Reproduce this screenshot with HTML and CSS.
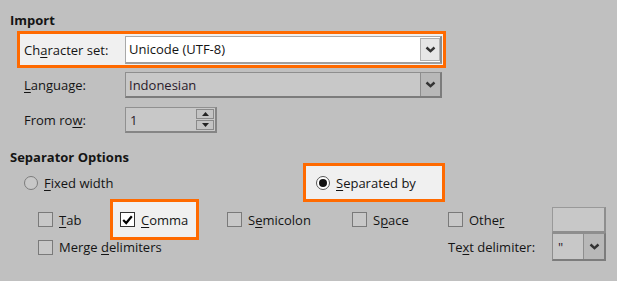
FILE: index.html
```html
<!DOCTYPE html>
<html>
<head>
<meta charset="utf-8">
<link rel="stylesheet" href="styles.css">
</head>
<body>
<div class="dlg">
  <div class="hd">Import</div>
  <div class="frow hl">
    <span class="lbl">Ch<u>a</u>racter set:</span>
    <div class="combo white">
      <span class="val">Unicode (UTF-8)</span>
      <span class="btn"><svg width="11" height="7" viewBox="0 0 11 7"><polyline points="1.5,1.5 5.5,5.2 9.5,1.5" fill="none" stroke="#333" stroke-width="2.4"/></svg></span>
    </div>
  </div>
  <div class="frow lang">
    <span class="lbl"><u>L</u>anguage:</span>
    <div class="combo gray">
      <span class="val">Indonesian</span>
      <span class="btn"><svg width="11" height="7" viewBox="0 0 11 7"><polyline points="1.5,1.5 5.5,5.2 9.5,1.5" fill="none" stroke="#333" stroke-width="2.4"/></svg></span>
    </div>
  </div>
  <div class="frow from">
    <span class="lbl">From ro<u>w</u>:</span>
    <div class="spin">
      <span class="val">1</span>
      <span class="spbtns">
        <span class="sb"><svg width="7" height="4" viewBox="0 0 7 4"><polygon points="0,4 3.5,0 7,4" fill="#222"/></svg></span>
        <span class="sb"><svg width="7" height="4" viewBox="0 0 7 4"><polygon points="0,0 3.5,4 7,0" fill="#222"/></svg></span>
      </span>
    </div>
  </div>
  <div class="hd sep">Separator Options</div>
  <div class="radios">
    <div class="ritem"><span class="radio"></span><span><u>F</u>ixed width</span></div>
    <div class="ritem hl2"><span class="radio on"><span class="dot"></span></span><span><u>S</u>eparated by</span></div>
  </div>
  <div class="cgrid crow">
    <div class="citem"><span class="cb"></span><span><u>T</u>ab</span></div>
    <div class="citem hl3"><span class="cb on"><svg width="11" height="10" viewBox="0 0 11 10"><polyline points="1.2,5 4.2,8 9.8,1.2" fill="none" stroke="#000" stroke-width="2.2"/></svg></span><span><u>C</u>omma</span></div>
    <div class="citem"><span class="cb"></span><span>S<u>e</u>micolon</span></div>
    <div class="citem"><span class="cb"></span><span>S<u>p</u>ace</span></div>
    <div class="citem"><span class="cb"></span><span>Othe<u>r</u></span></div>
    <div class="field"></div>
  </div>
  <div class="cgrid mrow">
    <div class="citem span4"><span class="cb"></span><span>Merge <u>d</u>elimiters</span></div>
    <div class="citem"><span>Te<u>x</u>t delimiter:</span></div>
    <div class="combo gray small">
      <span class="val">"</span>
      <span class="btn"><svg width="11" height="7" viewBox="0 0 11 7"><polyline points="1.5,1.5 5.5,5.2 9.5,1.5" fill="none" stroke="#333" stroke-width="2.4"/></svg></span>
    </div>
  </div>
</div>
</body>
</html>
```

FILE: styles.css
```css
html, body {
  margin: 0;
  padding: 0;
  background: #c0c0c0;
}
body {
  width: 617px;
  height: 281px;
  overflow: hidden;
  font-family: "Open Sans", "Noto Sans", sans-serif;
  font-size: 13px;
  color: #141414;
}
u { text-underline-offset: 2px; text-decoration-thickness: 1px; }
.dlg {
  padding-top: 10px;
}
.hd {
  font-weight: bold;
  padding-left: 10px;
  height: 20px;
  line-height: 20px;
}
.frow {
  display: flex;
  align-items: center;
  padding-left: 24px;
  height: 26px;
}
.frow .lbl { width: 101px; flex: none; }
.frow.hl {
  box-sizing: border-box;
  margin-top: 1px;
  margin-left: 17px;
  width: 429px;
  height: 37px;
  padding-left: 4px;
  border: 3px solid #ff6a00;
  background: #f0f0f0;
}
.frow.lang { margin-top: 4px; }
.frow.from { margin-top: 9px; }
.combo {
  box-sizing: border-box;
  display: flex;
  align-items: stretch;
  width: 317px;
  height: 26px;
}
.combo .val {
  flex: 1;
  padding-left: 3px;
  display: flex;
  align-items: center;
}
.combo .btn {
  width: 20px;
  display: flex;
  align-items: center;
  justify-content: center;
  box-sizing: border-box;
}
.combo.white {
  height: 28px;
  background: #fff;
  border: 1px solid #a9a9a9;
  border-right: 2px solid #8c8c8c;
  border-bottom: 2px solid #a0a0a0;
}
.combo.white .btn {
  background: #e6e6e6;
  border: 1px solid #b0b0b0;
  margin: 1px 0 1px 0;
}
.combo.gray {
  background: #c8c8c8;
  border: 1px solid #8e8e8e;
  border-right: 2px solid #7c7c7c;
  border-bottom: 2px solid #7c7c7c;
  color: #2a1a2a;
}
.combo.gray .btn {
  background: #b8b8b8;
  border-left: 1px solid #8e8e8e;
}
.spin {
  box-sizing: border-box;
  width: 92px;
  height: 26px;
  display: flex;
  background: #c8c8c8;
  border: 1px solid #909090;
  border-right: 2px solid #858585;
  border-bottom: 2px solid #858585;
  color: #2a1a2a;
}
.spin .val { flex: 1; padding-left: 4px; display: flex; align-items: center; }
.spbtns {
  display: flex;
  flex-direction: column;
  gap: 1px;
  padding: 1px 1px 0 0;
}
.sb {
  box-sizing: border-box;
  width: 18px;
  height: 10px;
  background: #c4c4c4;
  border: 1px solid #8a8a8a;
  display: flex;
  align-items: center;
  justify-content: center;
}
.hd.sep {
  margin-top: 14px;
  height: 16px;
}
.radios {
  display: grid;
  grid-template-columns: 279px 142px;
  padding-left: 24px;
  height: 36px;
  align-items: start;
}
.ritem {
  box-sizing: border-box;
  display: flex;
  align-items: center;
  gap: 6px;
  height: 39px;
}
.ritem.hl2 {
  border: 3px solid #ff6a00;
  background: #f0f0f0;
  padding-left: 10px;
}
.radio {
  box-sizing: border-box;
  width: 14px;
  height: 14px;
  border-radius: 50%;
  border: 1px solid #7c7c7c;
  background: #c8c8c8;
  display: flex;
  align-items: center;
  justify-content: center;
}
.radio.on { background: #fff; border-color: #555; }
.radio .dot { width: 8px; height: 8px; border-radius: 50%; background: #111; }
.cgrid {
  display: grid;
  grid-template-columns: 72px 117px 125px 96px 104px 54px;
  padding-left: 38px;
  align-items: center;
}
.crow { height: 26px; }
.mrow { height: 28px; margin-top: 8px; }
.citem {
  display: flex;
  align-items: center;
  gap: 6px;
}
.span4 { grid-column: span 4; }
.citem.hl3 {
  box-sizing: border-box;
  height: 41px;
  width: 89px;
  border: 3px solid #ff6a00;
  background: #f0f0f0;
  padding-left: 7px;
}
.cb {
  box-sizing: border-box;
  width: 15px;
  height: 15px;
  border: 1px solid #7a7a7a;
  background: #c8c8c8;
  display: flex;
  align-items: center;
  justify-content: center;
}
.cb.on { background: #fff; border-color: #333; }
.field {
  box-sizing: border-box;
  width: 54px;
  height: 26px;
  background: #c8c8c8;
  border: 1px solid #999;
  border-right: 2px solid #8e8e8e;
  border-bottom: 2px solid #8e8e8e;
}
.combo.small {
  width: 54px;
  height: 28px;
}
.combo.small .btn { width: 21px; }
.combo.small .val { padding-left: 5px; align-items: flex-start; padding-top: 4px; }
```
